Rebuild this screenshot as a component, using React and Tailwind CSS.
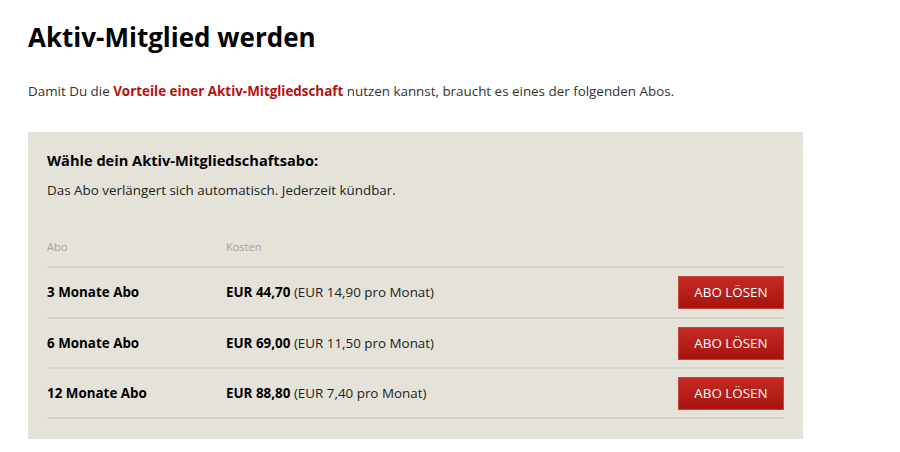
const plans = [
  { name: '3 Monate Abo', total: 'EUR 44,70', monthly: '(EUR 14,90 pro Monat)' },
  { name: '6 Monate Abo', total: 'EUR 69,00', monthly: '(EUR 11,50 pro Monat)' },
  { name: '12 Monate Abo', total: 'EUR 88,80', monthly: '(EUR 7,40 pro Monat)' },
];

const App = () => {
  return (
    <div className="min-h-[452px] bg-white pl-7 pt-5 font-['Open_Sans',sans-serif] text-[#222]">
      <h1 className="text-[26px] font-bold leading-[34px] text-black">Aktiv-Mitglied werden</h1>

      <p className="mt-[27px] text-[13.4px] leading-5 text-[#333]">
        Damit Du die{' '}
        <a href="#" className="font-bold text-[#b5120e]">Vorteile einer Aktiv-Mitgliedschaft</a>{' '}
        nutzen kannst, braucht es eines der folgenden Abos.
      </p>

      <div className="mt-[31px] w-[775px] bg-[#e5e2da] px-[19px] pt-[17px] pb-5">
        <h2 className="text-[14.6px] font-bold leading-[22px] text-black">Wähle dein Aktiv-Mitgliedschaftsabo:</h2>
        <p className="mt-[9px] text-[13.4px] leading-5 text-[#222]">Das Abo verlängert sich automatisch. Jederzeit kündbar.</p>

        <div className="mt-[39px] flex pb-[11px] text-[11px] leading-4 text-[#a5a39e]">
          <span className="w-[179px]">Abo</span>
          <span>Kosten</span>
        </div>

        {plans.map((plan, i) => (
          <div
            key={plan.name}
            className={`flex items-center border-t-2 border-[#d6d3cb] text-[13.4px] text-[#222] ${i === 0 ? 'h-[51px]' : 'h-[50px]'}`}
          >
            <span className="w-[179px] font-bold text-black">{plan.name}</span>
            <span className="flex-1">
              <b className="text-black">{plan.total}</b> {plan.monthly}
            </span>
            <button className="h-[33px] w-[106px] border border-[#c9443f] bg-gradient-to-b from-[#c42a24] to-[#a8120d] text-[13.4px] uppercase text-white">
              Abo lösen
            </button>
          </div>
        ))}
        <div className="border-t-2 border-[#d6d3cb]" />
      </div>
    </div>
  );
};

export default App;
